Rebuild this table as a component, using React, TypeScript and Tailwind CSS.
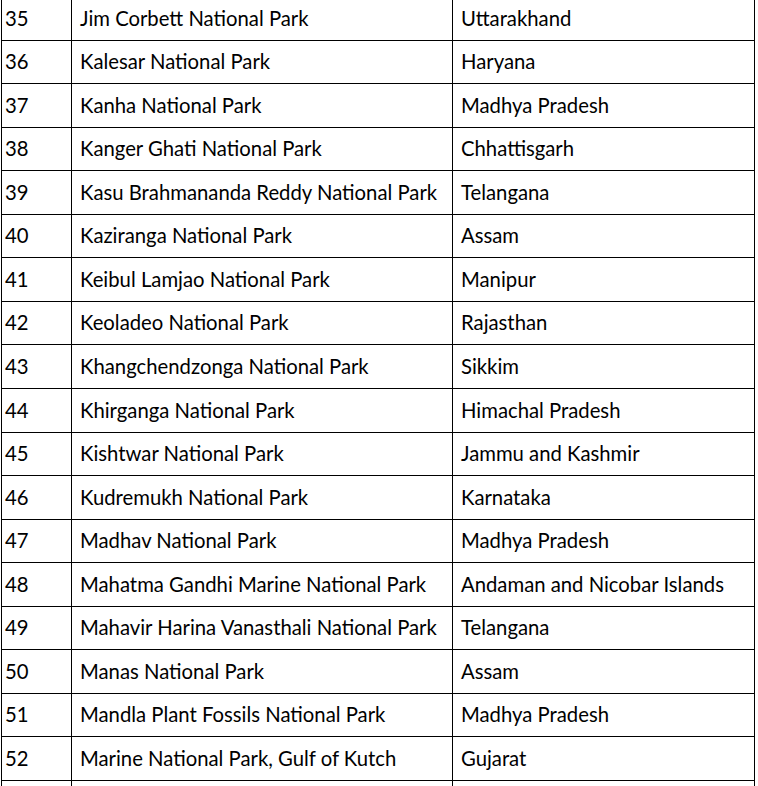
const rows: { n: string; park: string; state: string; h: string }[] = [
  { n: "35", park: "Jim Corbett National Park", state: "Uttarakhand", h: "h-[44px]" },
  { n: "36", park: "Kalesar National Park", state: "Haryana", h: "h-[43px]" },
  { n: "37", park: "Kanha National Park", state: "Madhya Pradesh", h: "h-[44px]" },
  { n: "38", park: "Kanger Ghati National Park", state: "Chhattisgarh", h: "h-[43px]" },
  { n: "39", park: "Kasu Brahmananda Reddy National Park", state: "Telangana", h: "h-[44px]" },
  { n: "40", park: "Kaziranga National Park", state: "Assam", h: "h-[43px]" },
  { n: "41", park: "Keibul Lamjao National Park", state: "Manipur", h: "h-[44px]" },
  { n: "42", park: "Keoladeo National Park", state: "Rajasthan", h: "h-[43px]" },
  { n: "43", park: "Khangchendzonga National Park", state: "Sikkim", h: "h-[44px]" },
  { n: "44", park: "Khirganga National Park", state: "Himachal Pradesh", h: "h-[44px]" },
  { n: "45", park: "Kishtwar National Park", state: "Jammu and Kashmir", h: "h-[43px]" },
  { n: "46", park: "Kudremukh National Park", state: "Karnataka", h: "h-[44px]" },
  { n: "47", park: "Madhav National Park", state: "Madhya Pradesh", h: "h-[43px]" },
  { n: "48", park: "Mahatma Gandhi Marine National Park", state: "Andaman and Nicobar Islands", h: "h-[44px]" },
  { n: "49", park: "Mahavir Harina Vanasthali National Park", state: "Telangana", h: "h-[43px]" },
  { n: "50", park: "Manas National Park", state: "Assam", h: "h-[44px]" },
  { n: "51", park: "Mandla Plant Fossils National Park", state: "Madhya Pradesh", h: "h-[43px]" },
  { n: "52", park: "Marine National Park, Gulf of Kutch", state: "Gujarat", h: "h-[44px]" },
  { n: "", park: "", state: "", h: "h-[44px]" },
];

export default function App() {
  return (
    <div
      className="w-[758px] h-[786px] overflow-hidden bg-white text-black"
      style={{ fontFamily: "Lato, 'Liberation Sans', sans-serif" }}
    >
      <div className="ml-[1px] -mt-[3px] flex flex-col w-[754px] border-l border-black">
        {rows.map((r, i) => (
          <div key={i} className={`flex ${r.h} shrink-0`}>
            <div className="w-[70px] shrink-0 border-r border-b border-black flex items-center pl-[3px] pb-[1px] text-[20.3px]">
              {r.n}
            </div>
            <div className="w-[381px] shrink-0 border-r border-b border-black flex items-center pl-[8px] pb-[1px] text-[20.3px]">
              {r.park}
            </div>
            <div className="w-[302px] shrink-0 border-r border-b border-black flex items-center pl-[8px] pb-[1px] text-[20.3px]">
              {r.state}
            </div>
          </div>
        ))}
      </div>
    </div>
  );
}
